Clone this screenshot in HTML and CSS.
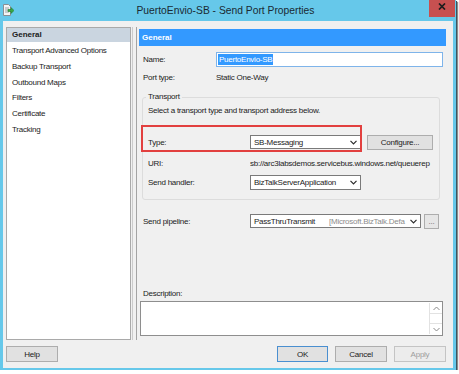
FILE: index.html
```html
<!DOCTYPE html>
<html lang="en">
<head>
	<meta charset="utf-8" />
	<title>PuertoEnvio-SB - Send Port Properties</title>
	<link rel="stylesheet" href="styles.css">
</head>
<body>

<div class="window">
	<div class="titlebar">
		<svg class="app-icon" width="12" height="14" viewBox="0 0 12 14">
			<path d="M1.5 1.5h5l2 2v9h-7z" fill="#f4f4f4" stroke="#8a8f94" />
			<path d="M3 5h4M3 7h3M3 9h4" stroke="#9aa3aa" />
			<path d="M6 6.5h3v-2l3 3-3 3v-2h-3z" fill="#39a845" stroke="#1f7a2c" stroke-width="0.6" />
		</svg>
		<div class="title">PuertoEnvio-SB - Send Port Properties</div>
		<div class="close">
			<svg width="8" height="7" viewBox="0 0 8 7">
				<path d="M1 0.5l6 6M7 0.5l-6 6" stroke="#1d1d1d" stroke-width="1.7" />
			</svg>
		</div>
	</div>

	<div class="client">
		<div class="main">
			<ul class="nav">
				<li class="active">General</li>
				<li>Transport Advanced Options</li>
				<li>Backup Transport</li>
				<li>Outbound Maps</li>
				<li>Filters</li>
				<li>Certificate</li>
				<li>Tracking</li>
			</ul>

			<div class="sep"></div>

			<div class="page">
				<div class="page-head">General</div>

				<div class="row name-row">
					<label class="lbl">Name:</label>
					<div class="textbox"><span class="selected">PuertoEnvio-SB</span></div>
				</div>

				<div class="row type-row">
					<label class="lbl">Port type:</label>
					<span>Static One-Way</span>
				</div>

				<fieldset class="group">
					<legend>Transport</legend>
					<p class="hint">Select a transport type and transport address below.</p>

					<div class="grow transport-type">
						<div class="redbox"></div>
						<label class="glbl">Type:</label>
						<div class="combo">
							<span>SB-Messaging</span>
							<svg width="7" height="5" viewBox="0 0 7 5"><path d="M0.5 0.8l3 3 3-3" fill="none" stroke="#2b2b2b" stroke-width="1.2" /></svg>
						</div>
						<button class="btn configure">Configure...</button>
					</div>

					<div class="grow uri-row">
						<label class="glbl">URI:</label>
						<span class="uri">sb://arc3labsdemos.servicebus.windows.net/queuerep</span>
					</div>

					<div class="grow handler-row">
						<label class="glbl">Send handler:</label>
						<div class="combo">
							<span>BizTalkServerApplication</span>
							<svg width="7" height="5" viewBox="0 0 7 5"><path d="M0.5 0.8l3 3 3-3" fill="none" stroke="#2b2b2b" stroke-width="1.2" /></svg>
						</div>
					</div>
				</fieldset>

				<div class="row pipeline-row">
					<label class="lbl wide">Send pipeline:</label>
					<div class="combo long">
						<span class="pipe-name">PassThruTransmit</span>
						<span class="pipe-asm">[Microsoft.BizTalk.Defa</span>
						<svg width="7" height="5" viewBox="0 0 7 5"><path d="M0.5 0.8l3 3 3-3" fill="none" stroke="#2b2b2b" stroke-width="1.2" /></svg>
					</div>
					<button class="btn dots">...</button>
				</div>

				<div class="desc-label">Description:</div>
				<div class="textarea">
					<div class="scrollbar">
						<div class="sb-btn up"><svg width="7" height="5" viewBox="0 0 7 5"><path d="M0.5 4l3-3 3 3" fill="none" stroke="#8a8a8a" /></svg></div>
						<div class="sb-track"></div>
						<div class="sb-btn down"><svg width="7" height="5" viewBox="0 0 7 5"><path d="M0.5 1l3 3 3-3" fill="none" stroke="#8a8a8a" /></svg></div>
					</div>
				</div>
			</div>
		</div>

		<div class="buttons">
			<button class="btn help">Help</button>
			<div class="spacer"></div>
			<button class="btn default">OK</button>
			<button class="btn">Cancel</button>
			<button class="btn disabled">Apply</button>
		</div>
	</div>
</div>

</body>
</html>
```

FILE: styles.css
```css
* {
	box-sizing: border-box;
}
body {
	margin: 0;
	background: #fff;
	font-family: "Liberation Sans", Arial, sans-serif;
	font-size: 8px;
	letter-spacing: -0.25px;
	color: #1b1b1b;
}

/* window frame */
.window {
	width: 456px;
	height: 370px;
	background: #66c8ea;
	display: flex;
	flex-direction: column;
	box-shadow: 1px 1px 0 #3d5560, 2px 2px 1px rgba(0, 0, 0, 0.45);
}
.titlebar {
	height: 21px;
	display: flex;
	align-items: flex-start;
}
.app-icon {
	margin: 3px 0 0 2px;
}
.title {
	flex: 1;
	padding-left: 8px;
	text-align: center;
	font-size: 10.3px;
	letter-spacing: 0;
	line-height: 21px;
	color: #1a2a33;
}
.close {
	width: 26px;
	height: 17px;
	margin-right: 1px;
	background: #c75050;
	display: flex;
	align-items: center;
	justify-content: center;
	padding-bottom: 4px;
}
.client {
	flex: 1;
	margin: 0 3px 2px 3px;
	background: #f0f0f0;
	padding: 6px 3px 0 3px;
}
.main {
	display: flex;
	height: 313px;
}

/* left navigation list */
.nav {
	flex: 0 0 125px;
	height: 313px;
	margin: 0;
	padding: 0;
	list-style: none;
	background: #fff;
	border: 1px solid #a9a9a9;
}
.nav li {
	height: 15.83px;
	line-height: 15.83px;
	padding-left: 5px;
	white-space: nowrap;
}
.nav li.active {
	height: 14px;
	line-height: 14px;
	margin-bottom: 1px;
	background: #cad5e0;
	font-weight: bold;
	letter-spacing: 0;
}
.sep {
	flex: 0 0 5px;
	margin: 0 2px 0 1px;
	border-left: 1px solid #cbcbcb;
	border-right: 1px solid #a3a3a3;
}

/* right page */
.page {
	flex: 1;
	min-width: 0;
	padding-right: 4px;
}
.page-head {
	margin-top: 2px;
	height: 17px;
	line-height: 17px;
	padding-left: 3px;
	background: #3399ff;
	color: #fff;
	font-weight: bold;
	letter-spacing: 0;
}
.row {
	display: flex;
	align-items: center;
	padding-left: 4px;
}
.lbl {
	width: 73px;
}
.lbl.wide {
	width: 107px;
}
.name-row {
	margin-top: 6px;
	height: 15px;
}
.textbox {
	width: 227px;
	height: 15px;
	background: #fff;
	border: 1px solid #7eb4ea;
	padding: 1px 0 0 1px;
}
.selected {
	display: inline-block;
	height: 11px;
	line-height: 11px;
	padding: 0 1px;
	background: #3399ff;
	color: #fff;
}
.type-row {
	margin-top: 3px;
	height: 14px;
}

/* transport group box */
.group {
	margin: 7px 6px 0 3px;
	padding: 0 6px 9px 5px;
	border: 1px solid #dcdcdc;
	border-radius: 3px;
	min-width: 0;
}
.group legend {
	margin-left: -2px;
	padding: 0 2px;
	line-height: 12px;
}
.hint {
	margin: 1px 0 0 0;
	line-height: 14px;
}
.grow {
	display: flex;
	align-items: center;
}
.glbl {
	flex: 0 0 102px;
}
.transport-type {
	position: relative;
	margin-top: 16px;
	height: 16px;
}
.redbox {
	position: absolute;
	top: -9px;
	left: -7px;
	width: 221px;
	height: 27px;
	border: 2px solid #e2403f;
}
.uri-row {
	margin-top: 6px;
	height: 15px;
}
.uri {
	width: 184px;
	overflow: hidden;
	white-space: nowrap;
}
.handler-row {
	margin-top: 3px;
	height: 16px;
}
.combo {
	flex: 0 0 111px;
	height: 15px;
	display: flex;
	align-items: center;
	padding: 0 3px;
	background: #fff;
	border: 1px solid #7a7a7a;
}
.combo span {
	flex: 1;
	white-space: nowrap;
	overflow: hidden;
}
.combo.long {
	flex-basis: 171px;
	height: 14px;
}
.combo .pipe-name {
	flex: 0 0 75px;
}
.combo .pipe-asm {
	color: #8c8c8c;
}
.transport-type .combo {
	height: 14px;
}

/* buttons */
.btn {
	font: inherit;
	letter-spacing: inherit;
	color: #1b1b1b;
	background: #e1e1e1;
	border: 1px solid #adadad;
	padding: 0;
	height: 16px;
	width: 52px;
	flex-shrink: 0;
}
.configure {
	margin-left: 6px;
	width: 66px;
	height: 15px;
}
.dots {
	margin-left: 3px;
	width: 15px;
	height: 15px;
	color: #6e6e6e;
	background: #e6e6e6;
}
.pipeline-row {
	margin-top: 13px;
	height: 16px;
}
.desc-label {
	margin-top: 58px;
	padding-left: 4px;
	line-height: 13px;
}
.textarea {
	margin: 1px 0 0 1px;
	width: 303px;
	height: 35px;
	background: #fff;
	border: 1px solid #8e8e8e;
	display: flex;
	justify-content: flex-end;
	padding: 1px 0;
}
.scrollbar {
	width: 13px;
	display: flex;
	flex-direction: column;
	border-left: 1px solid #e2e2e2;
}
.sb-btn {
	height: 11px;
	display: flex;
	align-items: center;
	justify-content: center;
}
.sb-btn.up {
	border-bottom: 1px solid #e2e2e2;
}
.sb-btn.down {
	border-top: 1px solid #e2e2e2;
}
.sb-track {
	flex: 1;
}
.buttons {
	display: flex;
	margin-top: 6px;
	padding-right: 4px;
}
.buttons .btn + .btn {
	margin-left: 7px;
}
.spacer {
	flex: 1;
}
.btn.default {
	width: 51px;
	border-color: #4a8fd0;
}
.btn.disabled {
	color: #9d9d9d;
	background: #ececec;
	border-color: #c4c4c4;
}
```
